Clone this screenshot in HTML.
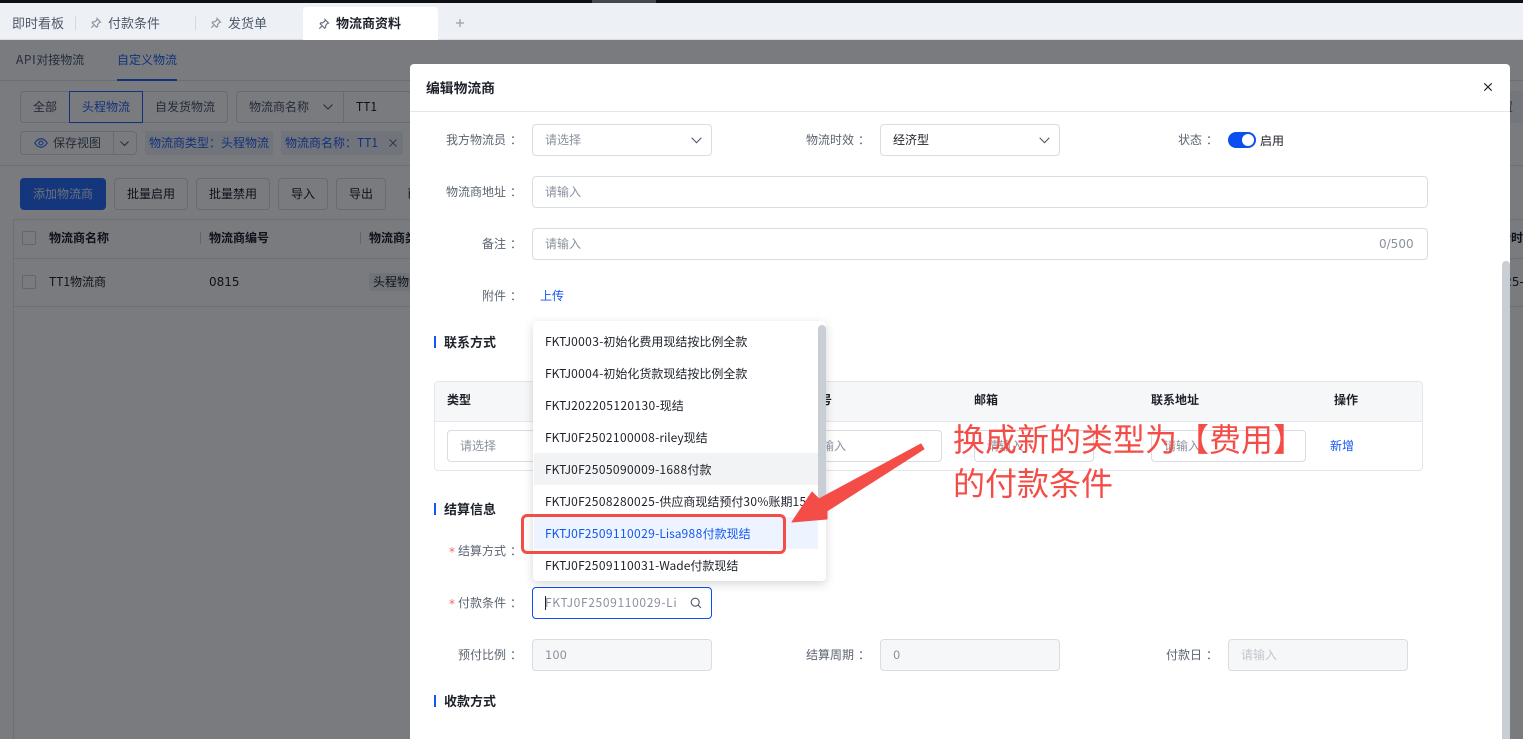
<!DOCTYPE html>
<html lang="zh"><head><meta charset="utf-8"><title>物流商资料</title>
<style>
*{box-sizing:border-box}
html,body{margin:0;padding:0;width:1523px;height:739px;overflow:hidden;background:#fff}
body{position:relative;font-family:"DejaVu Sans","Noto Sans CJK SC",sans-serif;font-size:12px;color:#1d2129}
.t{position:absolute;white-space:nowrap;line-height:20px;height:20px;font-family:"Noto Sans CJK SC","Liberation Sans",sans-serif}
.b{position:absolute}
.l{color:#5c6470}
.ph{color:#8a919f}
.inp{position:absolute;border:1px solid #d9dce1;border-radius:4px;background:#fff;height:32px}
.dis{background:#f6f7f9}
.btn{position:absolute;top:178px;height:32px;border:1px solid #d9dce1;border-radius:4px;background:#fff;text-align:center;line-height:29px;color:#1d2129;font-family:"Noto Sans CJK SC",sans-serif}
.sec{position:absolute;left:434px;width:2px;height:12px;background:#1456f0}
.h{font-weight:700;font-size:13px;color:#1d2129}
.th{font-weight:700;color:#1d2129}
.opt{position:absolute;left:534px;width:284px;height:32px;line-height:34px;padding-left:11px;white-space:nowrap;overflow:hidden;color:#1d2129;font-family:"Noto Sans CJK SC",sans-serif}
i{font-style:normal;letter-spacing:.38px}
.c{font-family:"Noto Sans CJK TC",sans-serif;position:relative;left:4px}
.ast{font-family:"DejaVu Sans",sans-serif;color:#f76560}
svg{position:absolute;overflow:visible}
</style></head><body>

<!-- top bar -->
<div class="b" style="left:0;top:0;width:1523px;height:3px;background:#0e1015"></div>
<div class="b" style="left:592px;top:0;width:64px;height:3px;background:#46484e"></div>
<div class="b" style="left:0;top:3px;width:1523px;height:37px;background:#edf1f5;border-bottom:1px solid #d9dde3"></div>
<div class="b" style="left:303px;top:7px;width:135px;height:33px;background:#fff;border-radius:4px 4px 0 0"></div>
<div class="b" style="left:75px;top:16px;width:1px;height:14px;background:#d5d9df"></div>
<div class="b" style="left:195px;top:16px;width:1px;height:14px;background:#d5d9df"></div>
<div class="t" style="left:12px;top:13px;font-size:13px;color:#4e5969">即时看板</div>
<div class="t" style="left:108px;top:13px;font-size:13px;color:#4e5969">付款条件</div>
<div class="t" style="left:228px;top:13px;font-size:13px;color:#4e5969">发货单</div>
<div class="t" style="left:336px;top:13px;font-size:13px;font-weight:700;color:#1d2129">物流商资料</div>
<svg style="left:90px;top:17px" width="12" height="12" viewBox="0 0 12 12" fill="none" stroke="#8d95a3" stroke-width="1.2"><path d="M7 1.5l3.5 3.5-1.2.4-1.8 2.4.1 1.7-1 .7-4.4-4.4.7-1 1.7.1 2.4-1.8zM3.7 8.3L1.3 10.7"/></svg>
<svg style="left:210px;top:17px" width="12" height="12" viewBox="0 0 12 12" fill="none" stroke="#8d95a3" stroke-width="1.2"><path d="M7 1.5l3.5 3.5-1.2.4-1.8 2.4.1 1.7-1 .7-4.4-4.4.7-1 1.7.1 2.4-1.8zM3.7 8.3L1.3 10.7"/></svg>
<svg style="left:318px;top:18px" width="12" height="12" viewBox="0 0 12 12" fill="none" stroke="#6b7280" stroke-width="1.2"><path d="M7 1.5l3.5 3.5-1.2.4-1.8 2.4.1 1.7-1 .7-4.4-4.4.7-1 1.7.1 2.4-1.8zM3.7 8.3L1.3 10.7"/></svg>
<svg style="left:455px;top:18px" width="10" height="10" viewBox="0 0 10 10" stroke="#9aa1ad" stroke-width="1.3"><path d="M5 1v8M1 5h8"/></svg>

<!-- background page -->
<div class="t" style="left:16px;top:50px;color:#4e5969"><span style="letter-spacing:.6px">API</span>对接物流</div>
<div class="t" style="left:117px;top:50px;color:#2a66f5">自定义物流</div>
<div class="b" style="left:0;top:80px;width:1523px;height:1px;background:#e5e6eb"></div>
<div class="b" style="left:117px;top:79px;width:60px;height:2px;background:#2a66f5"></div>

<div class="b" style="left:20px;top:91px;width:208px;height:32px;border:1px solid #d9dce1;border-radius:4px"></div>
<div class="b" style="left:69px;top:91px;width:74px;height:32px;border:1px solid #2a66f5"></div>
<div class="t" style="left:33px;top:97px;color:#4e5969">全部</div>
<div class="t" style="left:82px;top:97px;color:#2a66f5">头程物流</div>
<div class="t" style="left:155px;top:97px;color:#4e5969">自发货物流</div>
<div class="b" style="left:236px;top:91px;width:300px;height:32px;border:1px solid #d9dce1;border-radius:4px"></div>
<div class="b" style="left:343px;top:91px;width:1px;height:32px;background:#d9dce1"></div>
<div class="t" style="left:249px;top:97px;color:#4e5969">物流商名称</div>
<svg style="left:323px;top:104px" width="10" height="6" viewBox="0 0 10 6" fill="none" stroke="#4e5969"><path d="M.5.5L5 5 9.5.5"/></svg>
<div class="t" style="left:356px;top:97px;color:#1d2129">TT1</div>

<div class="b" style="left:20px;top:131px;width:117px;height:24px;border:1px solid #d9dce1;border-radius:4px"></div>
<div class="b" style="left:113px;top:131px;width:1px;height:24px;background:#d9dce1"></div>
<svg style="left:34px;top:138px" width="14" height="10" viewBox="0 0 14 10" fill="none" stroke="#2a66f5" stroke-width="1.1"><path d="M.8 5C3 1.6 5 .7 7 .7s4 .9 6.2 4.3C11 8.4 9 9.3 7 9.3S3 8.4.8 5z"/><circle cx="7" cy="5" r="2"/></svg>
<div class="t" style="left:53px;top:133px;color:#4e5969">保存视图</div>
<svg style="left:120px;top:141px" width="9" height="5" viewBox="0 0 9 5" fill="none" stroke="#4e5969"><path d="M.5.5l4 4 4-4"/></svg>
<div class="b" style="left:145px;top:131px;width:128px;height:24px;background:#eef1f6;border-radius:2px"></div>
<div class="b" style="left:281px;top:131px;width:122px;height:24px;background:#eef1f6;border-radius:2px"></div>
<div class="t" style="left:149px;top:133px;color:#2a66f5">物流商类型：头程物流</div>
<div class="t" style="left:285px;top:133px;color:#2a66f5">物流商名称：TT1</div>
<svg style="left:389px;top:139px" width="8" height="8" viewBox="0 0 8 8" stroke="#6b7280"><path d="M.5.5l7 7M7.5.5l-7 7"/></svg>
<div class="b" style="left:0;top:165px;width:1523px;height:1px;background:#e5e6eb"></div>

<div class="btn" style="left:20px;width:86px;background:#2b6ffa;border-color:#2b6ffa;color:#dfe6f5">添加物流商</div>
<div class="btn" style="left:114px;width:74px">批量启用</div>
<div class="btn" style="left:196px;width:74px">批量禁用</div>
<div class="btn" style="left:278px;width:50px">导入</div>
<div class="btn" style="left:336px;width:50px">导出</div>
<div class="t" style="left:407px;top:184px">已</div>

<div class="b" style="left:13px;top:219px;width:1510px;height:1px;background:#e5e6eb"></div>
<div class="b" style="left:13px;top:219px;width:1px;height:520px;background:#e5e6eb"></div>
<div class="b" style="left:13px;top:258px;width:1510px;height:1px;background:#e5e6eb"></div>
<div class="b" style="left:13px;top:306px;width:1510px;height:1px;background:#e5e6eb"></div>
<div class="b" style="left:22px;top:231px;width:14px;height:14px;border:1px solid #d0d4da;border-radius:2px"></div>
<div class="b" style="left:22px;top:275px;width:14px;height:14px;border:1px solid #d0d4da;border-radius:2px"></div>
<div class="b" style="left:200px;top:232px;width:1px;height:12px;background:#d0d4da"></div>
<div class="b" style="left:360px;top:232px;width:1px;height:12px;background:#d0d4da"></div>
<div class="t th" style="left:49px;top:228px">物流商名称</div>
<div class="t th" style="left:209px;top:228px">物流商编号</div>
<div class="t th" style="left:369px;top:228px">物流商类型</div>
<div class="t" style="left:49px;top:272px">TT1物流商</div>
<div class="t" style="left:209px;top:272px;font-family:'DejaVu Sans',sans-serif">0815</div>
<div class="b" style="left:369px;top:273px;width:60px;height:18px;background:#eef0f3;border-radius:2px"></div>
<div class="t" style="left:373px;top:272px">头程物流</div>
<div class="t th" style="left:1487px;top:228px">更新时间</div>
<div class="t" style="left:1489px;top:272px;font-family:'DejaVu Sans',sans-serif">2025-09</div>
<div class="b" style="left:1400px;top:91px;width:123px;height:32px;background:#f2f4f7"></div>
<div class="t" style="left:1489px;top:97px;color:#4e5969">重置</div>

<!-- overlay -->
<div class="b" style="left:0;top:40px;width:1523px;height:699px;background:rgba(0,4,12,.525)"></div>

<!-- modal -->
<div class="b" style="left:410px;top:64px;width:1100px;height:675px;background:#fff;border-radius:4px 4px 0 0"></div>
<div class="b" style="left:410px;top:111px;width:1100px;height:1px;background:#e5e6eb"></div>
<div class="t" style="left:426px;top:77px;font-weight:700;color:#1d2129;font-size:13.8px">编辑物流商</div>
<svg style="left:1484px;top:83px" width="8" height="8" viewBox="0 0 8 8" stroke="#1d2129" stroke-width="1.1"><path d="M.3.3l7.4 7.4M7.7.3L.3 7.7"/></svg>
<div class="b" style="left:1502px;top:261px;width:8px;height:478px;background:#c9cdd4;border-radius:4px 4px 0 0"></div>

<div class="t l" style="left:446px;top:130px">我方物流员<span class="c">：</span></div>
<div class="inp" style="left:532px;top:124px;width:180px"></div>
<div class="t ph" style="left:545px;top:130px">请选择</div>
<svg style="left:691px;top:137px" width="11" height="7" viewBox="0 0 11 7" fill="none" stroke="#4e5969" stroke-width="1.1"><path d="M.7.7l4.8 5 4.8-5"/></svg>
<div class="t l" style="left:806px;top:130px">物流时效<span class="c">：</span></div>
<div class="inp" style="left:880px;top:124px;width:180px"></div>
<div class="t" style="left:893px;top:130px">经济型</div>
<svg style="left:1039px;top:137px" width="11" height="7" viewBox="0 0 11 7" fill="none" stroke="#4e5969" stroke-width="1.1"><path d="M.7.7l4.8 5 4.8-5"/></svg>
<div class="t l" style="left:1178px;top:130px">状态<span class="c">：</span></div>
<div class="b" style="left:1228px;top:132px;width:28px;height:16px;border-radius:8px;background:#0a4ff0"></div>
<div class="b" style="left:1242px;top:134px;width:12px;height:12px;border-radius:50%;background:#fff"></div>
<div class="t" style="left:1260px;top:131px">启用</div>

<div class="t l" style="left:446px;top:182px">物流商地址<span class="c">：</span></div>
<div class="inp" style="left:532px;top:176px;width:896px"></div>
<div class="t ph" style="left:545px;top:182px">请输入</div>
<div class="t l" style="left:482px;top:234px">备注<span class="c">：</span></div>
<div class="inp" style="left:532px;top:228px;width:896px"></div>
<div class="t ph" style="left:545px;top:234px">请输入</div>
<div class="t ph" style="left:1379px;top:234px;font-family:'DejaVu Sans',sans-serif">0/500</div>
<div class="t l" style="left:482px;top:286px">附件<span class="c">：</span></div>
<div class="t" style="left:540px;top:286px;color:#1456f0">上传</div>

<div class="sec" style="top:336px"></div>
<div class="t h" style="left:444px;top:332px">联系方式</div>
<div class="b" style="left:434px;top:381px;width:989px;height:90px;border:1px solid #e5e6eb;border-radius:4px;overflow:hidden"><div style="height:40px;background:#f6f7f9;border-bottom:1px solid #e5e6eb"></div></div>
<div class="t th" style="left:447px;top:390px">类型</div>
<div class="t th" style="left:796px;top:390px">手机号</div>
<div class="t th" style="left:974px;top:390px">邮箱</div>
<div class="t th" style="left:1151px;top:390px">联系地址</div>
<div class="t th" style="left:1334px;top:390px">操作</div>
<div class="inp" style="left:447px;top:430px;width:120px"></div>
<div class="t ph" style="left:460px;top:436px">请选择</div>
<div class="inp" style="left:790px;top:430px;width:152px"></div>
<div class="t ph" style="left:810px;top:436px">请输入</div>
<div class="inp" style="left:974px;top:430px;width:120px"></div>
<div class="t ph" style="left:987px;top:436px">请输入</div>
<div class="inp" style="left:1151px;top:430px;width:155px"></div>
<div class="t ph" style="left:1164px;top:436px">请输入</div>
<div class="t" style="left:1330px;top:436px;color:#1456f0">新增</div>

<div class="sec" style="top:503px"></div>
<div class="t h" style="left:444px;top:499px">结算信息</div>
<div class="t ast" style="left:449px;top:542px">*</div>
<div class="t l" style="left:458px;top:541px">结算方式<span class="c">：</span></div>
<div class="t ast" style="left:449px;top:594px">*</div>
<div class="t l" style="left:458px;top:593px">付款条件<span class="c">：</span></div>
<div class="inp" style="left:532px;top:587px;width:180px;border-color:#0a4ff0"></div>
<div class="t ph" style="left:545px;top:593px;width:132px;overflow:hidden;letter-spacing:.65px">FKTJ0F2509110029-Lisa988付款现结</div>
<div class="b" style="left:545px;top:596px;width:1px;height:14px;background:#1d2129"></div>
<svg style="left:690px;top:597px" width="12" height="12" viewBox="0 0 12 12" fill="none" stroke="#4e5969" stroke-width="1.1"><circle cx="5.2" cy="5.2" r="4"/><path d="M8.2 8.2l2.8 2.8"/></svg>

<div class="t l" style="left:458px;top:645px">预付比例<span class="c">：</span></div>
<div class="inp dis" style="left:532px;top:639px;width:180px"></div>
<div class="t ph" style="left:545px;top:645px;font-family:'DejaVu Sans',sans-serif;font-size:11.5px">100</div>
<div class="t l" style="left:806px;top:645px">结算周期<span class="c">：</span></div>
<div class="inp dis" style="left:880px;top:639px;width:180px"></div>
<div class="t ph" style="left:893px;top:645px;font-family:'DejaVu Sans',sans-serif;font-size:11.5px">0</div>
<div class="t l" style="left:1166px;top:645px">付款日<span class="c">：</span></div>
<div class="inp dis" style="left:1228px;top:639px;width:180px"></div>
<div class="t" style="left:1241px;top:645px;color:#c2c6cd">请输入</div>

<div class="sec" style="top:695px"></div>
<div class="t h" style="left:444px;top:691px">收款方式</div>

<!-- dropdown -->
<div class="b" style="left:533px;top:321px;width:293px;height:260px;background:#fff;border-radius:4px;box-shadow:0 3px 10px rgba(0,0,0,.16)"></div>
<div class="b" style="left:818px;top:325px;width:8px;height:190px;background:#c9cdd4;border-radius:4px"></div>
<div class="opt" style="top:325px">FKTJ<i>0003</i>-初始化费用现结按比例全款</div>
<div class="opt" style="top:357px">FKTJ<i>0004</i>-初始化货款现结按比例全款</div>
<div class="opt" style="top:389px">FKTJ<i>202205120130</i>-现结</div>
<div class="opt" style="top:421px">FKTJ<i>0</i>F<i>2502100008</i>-riley现结</div>
<div class="opt" style="top:453px;background:#f2f3f5">FKTJ<i>0</i>F<i>2505090009</i>-<i>1688</i>付款</div>
<div class="opt" style="top:485px">FKTJ<i>0</i>F<i>2508280025</i>-供应商现结预付<i>30</i>%账期<i>15</i>天</div>
<div class="opt" style="top:517px;background:#eef4ff;color:#1456f0">FKTJ<i>0</i>F<i>2509110029</i>-Lisa<i>988</i>付款现结</div>
<div class="opt" style="top:549px">FKTJ<i>0</i>F<i>2509110031</i>-Wade付款现结</div>

<!-- annotation -->
<div class="b" style="left:521px;top:514px;width:265px;height:40px;border:3.5px solid #f44d47;border-radius:6px"></div>
<svg style="left:0;top:0" width="1523" height="739"><path fill="#f44d47" stroke="#f44d47" stroke-width="1" stroke-linejoin="round" d="M792 522L812 492 819 499 921 444 924 449 827 511 827 519z"/></svg>
<div class="t" style="left:953px;top:416px;height:44px;line-height:44px;font-size:32px;color:#f44d47">换成新的类型为【费用】</div>
<div class="t" style="left:953px;top:460px;height:44px;line-height:44px;font-size:32px;color:#f44d47">的付款条件</div>
</body></html>
